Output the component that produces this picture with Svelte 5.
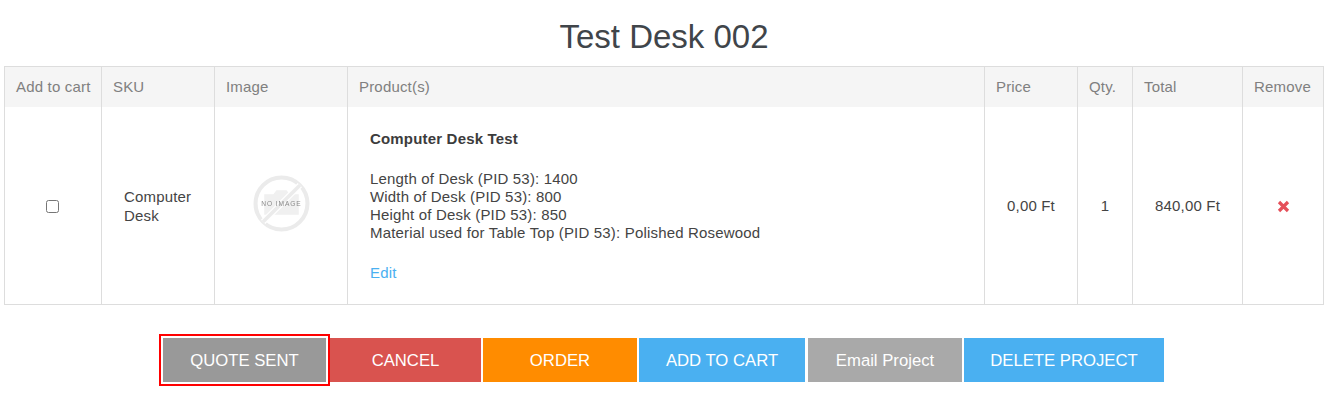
<script lang="ts">
    const buttons = [
        { label: "QUOTE SENT", kind: "sent" },
        { label: "CANCEL", kind: "cancel" },
        { label: "ORDER", kind: "order" },
        { label: "ADD TO CART", kind: "cart" },
        { label: "Email Project", kind: "email" },
        { label: "DELETE PROJECT", kind: "delete" },
    ];
    const options = [
        "Length of Desk (PID 53): 1400",
        "Width of Desk (PID 53): 800",
        "Height of Desk (PID 53): 850",
        "Material used for Table Top (PID 53): Polished Rosewood",
    ];
</script>

<div class="page">
    <h1>Test Desk 002</h1>

    <table>
        <colgroup>
            <col style="width: 97px" />
            <col style="width: 113px" />
            <col style="width: 133px" />
            <col style="width: 637px" />
            <col style="width: 93px" />
            <col style="width: 55px" />
            <col style="width: 110px" />
            <col style="width: 81px" />
        </colgroup>
        <thead>
            <tr>
                <th>Add to cart</th>
                <th>SKU</th>
                <th>Image</th>
                <th>Product(s)</th>
                <th>Price</th>
                <th>Qty.</th>
                <th>Total</th>
                <th>Remove</th>
            </tr>
        </thead>
        <tbody>
            <tr>
                <td class="center"><input type="checkbox" /></td>
                <td class="sku">Computer Desk</td>
                <td class="center">
                    <svg class="noimage" width="57" height="57" viewBox="0 0 56 56" role="img" aria-label="No image">
                        <circle cx="28" cy="28" r="25.5" fill="none" stroke="#ebebeb" stroke-width="4" />
                        <path d="M11 19h9l3-4h10l3 4h9v20H11z" fill="#f0f0f0" />
                        <path d="M10 46 46 10" stroke="#fff" stroke-width="6" />
                        <path d="M10 46 46 10" stroke="#ebebeb" stroke-width="3.5" />
                        <text x="28" y="30">NO IMAGE</text>
                    </svg>
                </td>
                <td class="product">
                    <p class="name">Computer Desk Test</p>
                    <div class="options">
                        {#each options as option}
                            <div>{option}</div>
                        {/each}
                    </div>
                    <a href="#edit">Edit</a>
                </td>
                <td class="center">0,00 Ft</td>
                <td class="center">1</td>
                <td class="center">840,00 Ft</td>
                <td class="center">
                    <svg class="remove" width="13" height="13" viewBox="0 0 13 13" role="img" aria-label="Remove">
                        <path d="M2 2l9 9M11 2l-9 9" stroke="#e5505a" stroke-width="3.2" fill="none" />
                    </svg>
                </td>
            </tr>
        </tbody>
    </table>

    <div class="actions">
        {#each buttons as b}
            <button class={b.kind}>{b.label}</button>
        {/each}
    </div>
</div>

<style>
    :global(body) {
        background: #fff;
    }

    .page {
        font-family: "Liberation Sans", Arial, sans-serif;
        font-size: 15px;
        letter-spacing: 0.18px;
        color: #444;
        padding: 0 12px 23px 4px;
    }

    h1 {
        margin: 0;
        padding-top: 17px;
        box-sizing: border-box;
        font-size: 33px;
        line-height: 40px;
        font-weight: 400;
        letter-spacing: 0;
        text-align: center;
        color: #40454a;
        width: 1320px;
        height: 66px;
    }

    table {
        width: 1320px;
        table-layout: fixed;
        border-collapse: collapse;
        border: 1px solid #ddd;
    }

    th {
        height: 39px;
        padding: 0 0 1px 11px;
        background: #f5f5f5;
        border-left: 1px solid #ddd;
        border-bottom: 0;
        color: #808080;
        font-weight: 400;
        text-align: left;
    }

    td {
        height: 197px;
        padding: 0;
        border-left: 1px solid #ddd;
        vertical-align: middle;
        line-height: 18px;
    }

    .center {
        text-align: center;
    }

    .sku {
        padding: 0 16px 0 22px;
        line-height: 19px;
    }

    .product {
        padding: 0 21px 0 22px;
    }

    .name {
        margin: 0 0 22px;
        font-weight: 700;
        color: #3c3c3c;
    }

    .options {
        margin-bottom: 22px;
    }

    a {
        color: #4ab0f1;
        text-decoration: none;
    }

    input {
        width: 13px;
        height: 13px;
        margin: 0 2px 0 0;
        vertical-align: middle;
    }

    .noimage {
        display: block;
        margin: -2px auto 2px;
        filter: blur(0.5px);
    }

    .noimage text {
        font-size: 6.5px;
        font-family: "Liberation Sans", Arial, sans-serif;
        letter-spacing: 0.9px;
        text-anchor: middle;
        fill: #8a8a8a;
    }

    .remove {
        vertical-align: middle;
    }

    .actions {
        display: flex;
        padding: 33px 0 0 155px;
    }

    button {
        height: 44px;
        margin: 0;
        border: 0;
        padding: 1px 0 0;
        color: #fff;
        font-family: inherit;
        font-size: 16.7px;
        cursor: pointer;
    }

    .sent {
        position: relative;
        z-index: 1;
        width: 163px;
        margin: 0 4px;
        background: #999;
        box-shadow: 0 0 0 2px #fff, 0 0 0 4px #f00;
    }

    .cancel {
        width: 151px;
        margin-right: 2px;
        background: #d9534f;
    }

    .order {
        width: 154px;
        margin-right: 2px;
        background: #ff8c00;
    }

    .cart {
        width: 166px;
        margin-right: 3px;
        background: #4ab0f1;
    }

    .email {
        width: 154px;
        margin-right: 2px;
        background: #a9a9a9;
    }

    .delete {
        width: 200px;
        background: #4ab0f1;
    }
</style>
